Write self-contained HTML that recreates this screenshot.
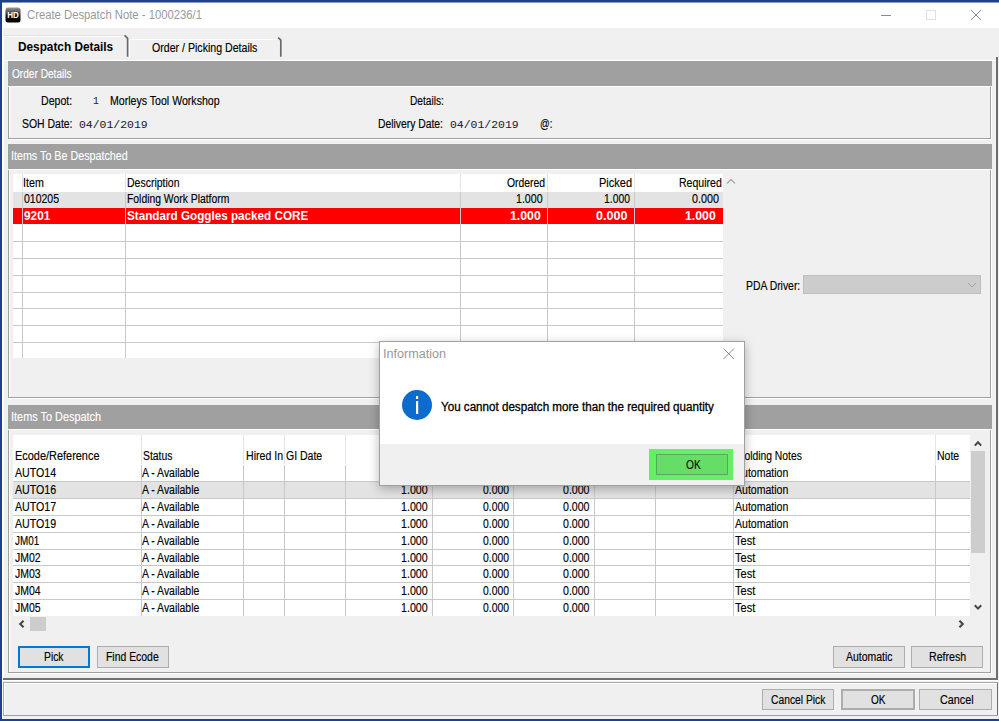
<!DOCTYPE html>
<html><head><meta charset="utf-8"><style>
html,body{margin:0;padding:0;}
body{width:999px;height:721px;position:relative;overflow:hidden;background:#f0f0f0;font-family:'Liberation Sans', sans-serif;}
.a{position:absolute;}
.t{position:absolute;white-space:nowrap;transform-origin:0 0;-webkit-text-stroke:0.15px currentColor;}
svg{position:absolute;}
</style></head><body>
<div class="a" style="left:0px;top:0px;width:999px;height:721px;background:#f0f0f0;"></div>
<div class="a" style="left:2px;top:2px;width:997px;height:26px;background:#ffffff;"></div>
<div class="a" style="left:2px;top:2px;width:997px;height:1px;background:#8d97b8;"></div>
<div class="a" style="left:0px;top:0px;width:999px;height:2px;background:#213f8f;"></div>
<div class="a" style="left:0px;top:0px;width:2px;height:721px;background:#213f8f;"></div>
<div class="a" style="left:0px;top:719px;width:999px;height:2px;background:#213f8f;"></div>
<svg style="left:5px;top:7px" width="16" height="16" viewBox="0 0 16 16">
<defs><linearGradient id="hdg" x1="0" y1="0" x2="0" y2="1"><stop offset="0" stop-color="#9a9a9a"/><stop offset="0.3" stop-color="#555"/><stop offset="0.55" stop-color="#111"/><stop offset="1" stop-color="#000"/></linearGradient></defs>
<rect x="0.5" y="0.5" width="15" height="15" rx="2.5" fill="url(#hdg)"/>
<text x="8" y="10.6" text-anchor="middle" font-family="Liberation Sans" font-weight="bold" font-size="8.8" textLength="11.6" lengthAdjust="spacingAndGlyphs" fill="#fff">HD</text>
</svg>
<div class="t" style="left:26.70px;top:4.80px;font:normal 13px/20px 'Liberation Sans', sans-serif;color:#999999;transform:scaleX(0.8679);-webkit-text-stroke:0;">Create Despatch Note - 1000236/1</div>
<div class="a" style="left:881px;top:15px;width:10px;height:1px;background:#8a8a8a;"></div>
<div class="a" style="left:926px;top:10px;width:10px;height:10px;border:1px solid #e0e0e0;box-sizing:border-box;"></div>
<svg style="left:970px;top:9px" width="12" height="12" viewBox="0 0 12 12"><path d="M1 1L11 11M11 1L1 11" stroke="#808080" stroke-width="0.9"/></svg>
<div class="a" style="left:4px;top:35px;width:123px;height:1px;background:#e3e3e3;"></div>
<div class="a" style="left:2px;top:27px;width:1px;height:692px;background:#ffffff;"></div>
<div class="a" style="left:4px;top:37px;width:124px;height:24px;background:#f0f0f0;"></div>
<div class="a" style="left:5px;top:36px;width:122px;height:1px;background:#ffffff;"></div>
<div class="a" style="left:3px;top:37px;width:1px;height:24px;background:#ffffff;"></div>
<svg style="left:0;top:0" width="300" height="60"><path d="M124.6 35.4L127.6 38.4L127.6 56.8" fill="none" stroke="#6a6a6a" stroke-width="1.7"/><path d="M278.2 37.6L280.8 40.2L280.8 56.8" fill="none" stroke="#6a6a6a" stroke-width="1.7"/></svg>
<div class="t" style="left:17.60px;top:37.00px;font:bold 12px/20px 'Liberation Sans', sans-serif;color:#000;transform:scaleX(0.9832);-webkit-text-stroke:0;">Despatch Details</div>
<div class="a" style="left:130px;top:39px;width:147px;height:1px;background:#ffffff;"></div>
<div class="a" style="left:129px;top:40px;width:1px;height:17px;background:#ffffff;"></div>
<div class="t" style="left:151.60px;top:38.00px;font:normal 12px/20px 'Liberation Sans', sans-serif;color:#000;transform:scaleX(0.8829);">Order / Picking Details</div>
<div class="a" style="left:3px;top:60px;width:994px;height:1px;background:#ffffff;"></div>
<div class="a" style="left:3px;top:60px;width:1px;height:620px;background:#ffffff;"></div>
<div class="a" style="left:996px;top:57px;width:2px;height:623px;background:#6e6e6e;"></div>
<div class="a" style="left:3px;top:678px;width:995px;height:2px;background:#707070;"></div>
<div class="a" style="left:8px;top:61px;width:984px;height:25px;background:#a0a0a0;"></div>
<div class="t" style="left:12.00px;top:63.50px;font:normal 12px/20px 'Liberation Sans', sans-serif;color:#ffffff;transform:scaleX(0.8431);-webkit-text-stroke:0.12px #fff;">Order Details</div>
<div class="a" style="left:8px;top:86px;width:984px;height:1px;background:#ffffff;"></div>
<div class="a" style="left:8px;top:87px;width:1px;height:52px;background:#a0a0a0;"></div>
<div class="a" style="left:9px;top:87px;width:1px;height:52px;background:#ffffff;"></div>
<div class="a" style="left:9px;top:138px;width:982px;height:1px;background:#a0a0a0;"></div>
<div class="a" style="left:8px;top:139px;width:984px;height:1px;background:#ffffff;"></div>
<div class="a" style="left:990px;top:87px;width:1px;height:52px;background:#a0a0a0;"></div>
<div class="a" style="left:991px;top:86px;width:1px;height:53px;background:#ffffff;"></div>
<div class="t" style="left:40.80px;top:91.00px;font:normal 12px/20px 'Liberation Sans', sans-serif;color:#000;transform:scaleX(0.8823);">Depot:</div>
<div class="t" style="left:92.60px;top:91.00px;font:normal 10.5px/20px 'Liberation Mono', monospace;color:#1a1a30;transform:scaleX(0.9167);-webkit-text-stroke:0.05px #1a1a30;">1</div>
<div class="t" style="left:110.20px;top:91.00px;font:normal 12px/20px 'Liberation Sans', sans-serif;color:#000;transform:scaleX(0.8821);">Morleys Tool Workshop</div>
<div class="t" style="left:21.50px;top:114.30px;font:normal 12px/20px 'Liberation Sans', sans-serif;color:#000;transform:scaleX(0.8702);">SOH Date:</div>
<div class="t" style="left:78.70px;top:115.30px;font:normal 10.5px/20px 'Liberation Mono', monospace;color:#1a1a30;transform:scaleX(1.0892);-webkit-text-stroke:0.05px #1a1a30;">04/01/2019</div>
<div class="t" style="left:409.60px;top:91.00px;font:normal 12px/20px 'Liberation Sans', sans-serif;color:#000;transform:scaleX(0.8443);">Details:</div>
<div class="t" style="left:378.40px;top:114.30px;font:normal 12px/20px 'Liberation Sans', sans-serif;color:#000;transform:scaleX(0.8624);">Delivery Date:</div>
<div class="t" style="left:450.40px;top:115.30px;font:normal 10.5px/20px 'Liberation Mono', monospace;color:#1a1a30;transform:scaleX(1.0892);-webkit-text-stroke:0.05px #1a1a30;">04/01/2019</div>
<div class="t" style="left:539.60px;top:114.30px;font:normal 12px/20px 'Liberation Sans', sans-serif;color:#000;transform:scaleX(0.7970);">@:</div>
<div class="a" style="left:8px;top:144px;width:984px;height:25px;background:#a0a0a0;"></div>
<div class="t" style="left:11.31px;top:146.00px;font:normal 12px/20px 'Liberation Sans', sans-serif;color:#ffffff;transform:scaleX(0.8942);-webkit-text-stroke:0.12px #fff;">Items To Be Despatched</div>
<div class="a" style="left:8px;top:169px;width:984px;height:1px;background:#ffffff;"></div>
<div class="a" style="left:8px;top:170px;width:1px;height:228px;background:#a0a0a0;"></div>
<div class="a" style="left:9px;top:170px;width:1px;height:227px;background:#ffffff;"></div>
<div class="a" style="left:9px;top:397px;width:982px;height:1px;background:#a0a0a0;"></div>
<div class="a" style="left:8px;top:398px;width:984px;height:1px;background:#ffffff;"></div>
<div class="a" style="left:990px;top:170px;width:1px;height:228px;background:#a0a0a0;"></div>
<div class="a" style="left:991px;top:169px;width:1px;height:230px;background:#ffffff;"></div>
<div class="a" style="left:13px;top:174px;width:710px;height:184px;background:#ffffff;"></div>
<div class="a" style="left:13px;top:192px;width:710px;height:16px;background:#e3e3e3;"></div>
<div class="a" style="left:13px;top:208px;width:710px;height:16px;background:#ff0000;"></div>
<div class="a" style="left:13px;top:241px;width:710px;height:1px;background:#c8c8c8;"></div>
<div class="a" style="left:13px;top:258px;width:710px;height:1px;background:#c8c8c8;"></div>
<div class="a" style="left:13px;top:275px;width:710px;height:1px;background:#c8c8c8;"></div>
<div class="a" style="left:13px;top:292px;width:710px;height:1px;background:#c8c8c8;"></div>
<div class="a" style="left:13px;top:308px;width:710px;height:1px;background:#c8c8c8;"></div>
<div class="a" style="left:13px;top:325px;width:710px;height:1px;background:#c8c8c8;"></div>
<div class="a" style="left:13px;top:342px;width:710px;height:1px;background:#c8c8c8;"></div>
<div class="a" style="left:22px;top:174px;width:1px;height:17px;background:#e4e4e4;"></div>
<div class="a" style="left:22px;top:192px;width:1px;height:166px;background:#c8c8c8;"></div>
<div class="a" style="left:125px;top:174px;width:1px;height:17px;background:#e4e4e4;"></div>
<div class="a" style="left:125px;top:192px;width:1px;height:166px;background:#c8c8c8;"></div>
<div class="a" style="left:460px;top:174px;width:1px;height:17px;background:#e4e4e4;"></div>
<div class="a" style="left:460px;top:192px;width:1px;height:166px;background:#c8c8c8;"></div>
<div class="a" style="left:547px;top:174px;width:1px;height:17px;background:#e4e4e4;"></div>
<div class="a" style="left:547px;top:192px;width:1px;height:166px;background:#c8c8c8;"></div>
<div class="a" style="left:634px;top:174px;width:1px;height:17px;background:#e4e4e4;"></div>
<div class="a" style="left:634px;top:192px;width:1px;height:166px;background:#c8c8c8;"></div>
<div class="t" style="left:23.11px;top:172.50px;font:normal 12px/20px 'Liberation Sans', sans-serif;color:#000;transform:scaleX(0.8907);">Item</div>
<div class="t" style="left:126.90px;top:172.50px;font:normal 12px/20px 'Liberation Sans', sans-serif;color:#000;transform:scaleX(0.8745);">Description</div>
<div class="t" style="left:507.30px;top:172.80px;font:normal 12px/20px 'Liberation Sans', sans-serif;color:#000;transform:scaleX(0.8651);">Ordered</div>
<div class="t" style="left:599.30px;top:172.80px;font:normal 12px/20px 'Liberation Sans', sans-serif;color:#000;transform:scaleX(0.9167);">Picked</div>
<div class="t" style="left:678.80px;top:172.80px;font:normal 12px/20px 'Liberation Sans', sans-serif;color:#000;transform:scaleX(0.8787);">Required</div>
<svg style="left:726px;top:178px" width="10" height="7" viewBox="0 0 10 7"><path d="M1 5.5L5 1.5L9 5.5" fill="none" stroke="#a8a8a8" stroke-width="1.3"/></svg>
<div class="t" style="left:24.00px;top:189.10px;font:normal 12px/20px 'Liberation Sans', sans-serif;color:#000;transform:scaleX(0.8744);">010205</div>
<div class="t" style="left:126.90px;top:189.10px;font:normal 12px/20px 'Liberation Sans', sans-serif;color:#000;transform:scaleX(0.8634);">Folding Work Platform</div>
<div class="t" style="left:516.30px;top:189.00px;font:normal 12px/20px 'Liberation Sans', sans-serif;color:#000;transform:scaleX(0.8862);">1.000</div>
<div class="t" style="left:603.50px;top:189.00px;font:normal 12px/20px 'Liberation Sans', sans-serif;color:#000;transform:scaleX(0.8631);">1.000</div>
<div class="t" style="left:691.60px;top:189.00px;font:normal 12px/20px 'Liberation Sans', sans-serif;color:#000;transform:scaleX(0.8960);">0.000</div>
<div class="t" style="left:24.00px;top:206.00px;font:bold 12px/20px 'Liberation Sans', sans-serif;color:#fff;transform:scaleX(0.9844);-webkit-text-stroke:0;">9201</div>
<div class="t" style="left:127.00px;top:206.00px;font:bold 12px/20px 'Liberation Sans', sans-serif;color:#fff;transform:scaleX(0.9745);-webkit-text-stroke:0;">Standard Goggles packed CORE</div>
<div class="t" style="left:509.90px;top:206.00px;font:bold 12px/20px 'Liberation Sans', sans-serif;color:#fff;transform:scaleX(1.0245);-webkit-text-stroke:0;">1.000</div>
<div class="t" style="left:596.40px;top:206.00px;font:bold 12px/20px 'Liberation Sans', sans-serif;color:#fff;transform:scaleX(1.0443);-webkit-text-stroke:0;">0.000</div>
<div class="t" style="left:685.20px;top:206.00px;font:bold 12px/20px 'Liberation Sans', sans-serif;color:#fff;transform:scaleX(1.0245);-webkit-text-stroke:0;">1.000</div>
<div class="t" style="left:745.70px;top:275.60px;font:normal 12px/20px 'Liberation Sans', sans-serif;color:#000;transform:scaleX(0.8650);">PDA Driver:</div>
<div class="a" style="left:803px;top:275px;width:178px;height:19px;background:#cccccc;border:1px solid #bfbfbf;box-sizing:border-box;"></div>
<svg style="left:967px;top:282px" width="10" height="6" viewBox="0 0 10 6"><path d="M1 1L5 5L9 1" fill="none" stroke="#a0a0a0" stroke-width="1"/></svg>
<div class="a" style="left:8px;top:405px;width:984px;height:24px;background:#a0a0a0;"></div>
<div class="t" style="left:11.29px;top:407.00px;font:normal 12px/20px 'Liberation Sans', sans-serif;color:#ffffff;transform:scaleX(0.9089);-webkit-text-stroke:0.12px #fff;">Items To Despatch</div>
<div class="a" style="left:8px;top:429px;width:984px;height:1px;background:#ffffff;"></div>
<div class="a" style="left:8px;top:430px;width:1px;height:243px;background:#a0a0a0;"></div>
<div class="a" style="left:9px;top:430px;width:1px;height:243px;background:#ffffff;"></div>
<div class="a" style="left:9px;top:672px;width:982px;height:1px;background:#a0a0a0;"></div>
<div class="a" style="left:8px;top:673px;width:984px;height:1px;background:#ffffff;"></div>
<div class="a" style="left:990px;top:430px;width:1px;height:243px;background:#a0a0a0;"></div>
<div class="a" style="left:991px;top:429px;width:1px;height:244px;background:#ffffff;"></div>
<div class="a" style="left:13px;top:435px;width:957px;height:181px;background:#ffffff;"></div>
<div class="a" style="left:13px;top:482px;width:957px;height:16px;background:#e3e3e3;"></div>
<div class="a" style="left:13px;top:481px;width:957px;height:1px;background:#c8c8c8;"></div>
<div class="a" style="left:13px;top:498px;width:957px;height:1px;background:#c8c8c8;"></div>
<div class="a" style="left:13px;top:515px;width:957px;height:1px;background:#c8c8c8;"></div>
<div class="a" style="left:13px;top:532px;width:957px;height:1px;background:#c8c8c8;"></div>
<div class="a" style="left:13px;top:549px;width:957px;height:1px;background:#c8c8c8;"></div>
<div class="a" style="left:13px;top:565px;width:957px;height:1px;background:#c8c8c8;"></div>
<div class="a" style="left:13px;top:582px;width:957px;height:1px;background:#c8c8c8;"></div>
<div class="a" style="left:13px;top:599px;width:957px;height:1px;background:#c8c8c8;"></div>
<div class="a" style="left:141px;top:435px;width:1px;height:29px;background:#e4e4e4;"></div>
<div class="a" style="left:141px;top:465px;width:1px;height:151px;background:#c8c8c8;"></div>
<div class="a" style="left:243px;top:435px;width:1px;height:29px;background:#e4e4e4;"></div>
<div class="a" style="left:243px;top:465px;width:1px;height:151px;background:#c8c8c8;"></div>
<div class="a" style="left:284px;top:435px;width:1px;height:29px;background:#e4e4e4;"></div>
<div class="a" style="left:284px;top:465px;width:1px;height:151px;background:#c8c8c8;"></div>
<div class="a" style="left:345px;top:435px;width:1px;height:29px;background:#e4e4e4;"></div>
<div class="a" style="left:345px;top:465px;width:1px;height:151px;background:#c8c8c8;"></div>
<div class="a" style="left:432px;top:435px;width:1px;height:29px;background:#e4e4e4;"></div>
<div class="a" style="left:432px;top:465px;width:1px;height:151px;background:#c8c8c8;"></div>
<div class="a" style="left:513px;top:435px;width:1px;height:29px;background:#e4e4e4;"></div>
<div class="a" style="left:513px;top:465px;width:1px;height:151px;background:#c8c8c8;"></div>
<div class="a" style="left:594px;top:435px;width:1px;height:29px;background:#e4e4e4;"></div>
<div class="a" style="left:594px;top:465px;width:1px;height:151px;background:#c8c8c8;"></div>
<div class="a" style="left:655px;top:435px;width:1px;height:29px;background:#e4e4e4;"></div>
<div class="a" style="left:655px;top:465px;width:1px;height:151px;background:#c8c8c8;"></div>
<div class="a" style="left:733px;top:435px;width:1px;height:29px;background:#e4e4e4;"></div>
<div class="a" style="left:733px;top:465px;width:1px;height:151px;background:#c8c8c8;"></div>
<div class="a" style="left:935px;top:435px;width:1px;height:29px;background:#e4e4e4;"></div>
<div class="a" style="left:935px;top:465px;width:1px;height:151px;background:#c8c8c8;"></div>
<div class="t" style="left:15.20px;top:445.70px;font:normal 12px/20px 'Liberation Sans', sans-serif;color:#000;transform:scaleX(0.9113);">Ecode/Reference</div>
<div class="t" style="left:142.50px;top:445.70px;font:normal 12px/20px 'Liberation Sans', sans-serif;color:#000;transform:scaleX(0.8671);">Status</div>
<div class="t" style="left:245.50px;top:445.70px;font:normal 12px/20px 'Liberation Sans', sans-serif;color:#000;transform:scaleX(0.8828);">Hired In</div>
<div class="t" style="left:285.50px;top:445.70px;font:normal 12px/20px 'Liberation Sans', sans-serif;color:#000;transform:scaleX(0.8758);">GI Date</div>
<div class="t" style="left:736.68px;top:445.70px;font:normal 12px/20px 'Liberation Sans', sans-serif;color:#000;transform:scaleX(0.8600);">Holding Notes</div>
<div class="t" style="left:937.30px;top:445.70px;font:normal 12px/20px 'Liberation Sans', sans-serif;color:#000;transform:scaleX(0.8725);">Note</div>
<div class="t" style="left:15.00px;top:463.30px;font:normal 12px/20px 'Liberation Sans', sans-serif;color:#000;transform:scaleX(0.8869);">AUTO14</div>
<div class="t" style="left:142.00px;top:463.30px;font:normal 12px/20px 'Liberation Sans', sans-serif;color:#000;transform:scaleX(0.8707);">A - Available</div>
<div class="t" style="left:400.80px;top:463.30px;font:normal 12px/20px 'Liberation Sans', sans-serif;color:#000;transform:scaleX(0.8895);">1.000</div>
<div class="t" style="left:482.70px;top:463.30px;font:normal 12px/20px 'Liberation Sans', sans-serif;color:#000;transform:scaleX(0.8631);">0.000</div>
<div class="t" style="left:563.20px;top:463.30px;font:normal 12px/20px 'Liberation Sans', sans-serif;color:#000;transform:scaleX(0.8829);">0.000</div>
<div class="t" style="left:735.40px;top:463.30px;font:normal 12px/20px 'Liberation Sans', sans-serif;color:#000;transform:scaleX(0.8779);">Automation</div>
<div class="t" style="left:15.00px;top:480.15px;font:normal 12px/20px 'Liberation Sans', sans-serif;color:#000;transform:scaleX(0.8869);">AUTO16</div>
<div class="t" style="left:142.00px;top:480.15px;font:normal 12px/20px 'Liberation Sans', sans-serif;color:#000;transform:scaleX(0.8707);">A - Available</div>
<div class="t" style="left:400.80px;top:480.15px;font:normal 12px/20px 'Liberation Sans', sans-serif;color:#000;transform:scaleX(0.8895);">1.000</div>
<div class="t" style="left:482.70px;top:480.15px;font:normal 12px/20px 'Liberation Sans', sans-serif;color:#000;transform:scaleX(0.8631);">0.000</div>
<div class="t" style="left:563.20px;top:480.15px;font:normal 12px/20px 'Liberation Sans', sans-serif;color:#000;transform:scaleX(0.8829);">0.000</div>
<div class="t" style="left:735.40px;top:480.15px;font:normal 12px/20px 'Liberation Sans', sans-serif;color:#000;transform:scaleX(0.8779);">Automation</div>
<div class="t" style="left:15.00px;top:497.00px;font:normal 12px/20px 'Liberation Sans', sans-serif;color:#000;transform:scaleX(0.8869);">AUTO17</div>
<div class="t" style="left:142.00px;top:497.00px;font:normal 12px/20px 'Liberation Sans', sans-serif;color:#000;transform:scaleX(0.8707);">A - Available</div>
<div class="t" style="left:400.80px;top:497.00px;font:normal 12px/20px 'Liberation Sans', sans-serif;color:#000;transform:scaleX(0.8895);">1.000</div>
<div class="t" style="left:482.70px;top:497.00px;font:normal 12px/20px 'Liberation Sans', sans-serif;color:#000;transform:scaleX(0.8631);">0.000</div>
<div class="t" style="left:563.20px;top:497.00px;font:normal 12px/20px 'Liberation Sans', sans-serif;color:#000;transform:scaleX(0.8829);">0.000</div>
<div class="t" style="left:735.40px;top:497.00px;font:normal 12px/20px 'Liberation Sans', sans-serif;color:#000;transform:scaleX(0.8779);">Automation</div>
<div class="t" style="left:15.00px;top:513.85px;font:normal 12px/20px 'Liberation Sans', sans-serif;color:#000;transform:scaleX(0.8869);">AUTO19</div>
<div class="t" style="left:142.00px;top:513.85px;font:normal 12px/20px 'Liberation Sans', sans-serif;color:#000;transform:scaleX(0.8707);">A - Available</div>
<div class="t" style="left:400.80px;top:513.85px;font:normal 12px/20px 'Liberation Sans', sans-serif;color:#000;transform:scaleX(0.8895);">1.000</div>
<div class="t" style="left:482.70px;top:513.85px;font:normal 12px/20px 'Liberation Sans', sans-serif;color:#000;transform:scaleX(0.8631);">0.000</div>
<div class="t" style="left:563.20px;top:513.85px;font:normal 12px/20px 'Liberation Sans', sans-serif;color:#000;transform:scaleX(0.8829);">0.000</div>
<div class="t" style="left:735.40px;top:513.85px;font:normal 12px/20px 'Liberation Sans', sans-serif;color:#000;transform:scaleX(0.8779);">Automation</div>
<div class="t" style="left:15.00px;top:530.70px;font:normal 12px/20px 'Liberation Sans', sans-serif;color:#000;transform:scaleX(0.8224);">JM01</div>
<div class="t" style="left:142.00px;top:530.70px;font:normal 12px/20px 'Liberation Sans', sans-serif;color:#000;transform:scaleX(0.8707);">A - Available</div>
<div class="t" style="left:400.80px;top:530.70px;font:normal 12px/20px 'Liberation Sans', sans-serif;color:#000;transform:scaleX(0.8895);">1.000</div>
<div class="t" style="left:482.70px;top:530.70px;font:normal 12px/20px 'Liberation Sans', sans-serif;color:#000;transform:scaleX(0.8631);">0.000</div>
<div class="t" style="left:563.20px;top:530.70px;font:normal 12px/20px 'Liberation Sans', sans-serif;color:#000;transform:scaleX(0.8829);">0.000</div>
<div class="t" style="left:735.40px;top:530.70px;font:normal 12px/20px 'Liberation Sans', sans-serif;color:#000;transform:scaleX(0.9174);">Test</div>
<div class="t" style="left:15.00px;top:547.55px;font:normal 12px/20px 'Liberation Sans', sans-serif;color:#000;transform:scaleX(0.8729);">JM02</div>
<div class="t" style="left:142.00px;top:547.55px;font:normal 12px/20px 'Liberation Sans', sans-serif;color:#000;transform:scaleX(0.8707);">A - Available</div>
<div class="t" style="left:400.80px;top:547.55px;font:normal 12px/20px 'Liberation Sans', sans-serif;color:#000;transform:scaleX(0.8895);">1.000</div>
<div class="t" style="left:482.70px;top:547.55px;font:normal 12px/20px 'Liberation Sans', sans-serif;color:#000;transform:scaleX(0.8631);">0.000</div>
<div class="t" style="left:563.20px;top:547.55px;font:normal 12px/20px 'Liberation Sans', sans-serif;color:#000;transform:scaleX(0.8829);">0.000</div>
<div class="t" style="left:735.40px;top:547.55px;font:normal 12px/20px 'Liberation Sans', sans-serif;color:#000;transform:scaleX(0.9174);">Test</div>
<div class="t" style="left:15.00px;top:564.40px;font:normal 12px/20px 'Liberation Sans', sans-serif;color:#000;transform:scaleX(0.8729);">JM03</div>
<div class="t" style="left:142.00px;top:564.40px;font:normal 12px/20px 'Liberation Sans', sans-serif;color:#000;transform:scaleX(0.8707);">A - Available</div>
<div class="t" style="left:400.80px;top:564.40px;font:normal 12px/20px 'Liberation Sans', sans-serif;color:#000;transform:scaleX(0.8895);">1.000</div>
<div class="t" style="left:482.70px;top:564.40px;font:normal 12px/20px 'Liberation Sans', sans-serif;color:#000;transform:scaleX(0.8631);">0.000</div>
<div class="t" style="left:563.20px;top:564.40px;font:normal 12px/20px 'Liberation Sans', sans-serif;color:#000;transform:scaleX(0.8829);">0.000</div>
<div class="t" style="left:735.40px;top:564.40px;font:normal 12px/20px 'Liberation Sans', sans-serif;color:#000;transform:scaleX(0.9174);">Test</div>
<div class="t" style="left:15.00px;top:581.25px;font:normal 12px/20px 'Liberation Sans', sans-serif;color:#000;transform:scaleX(0.8729);">JM04</div>
<div class="t" style="left:142.00px;top:581.25px;font:normal 12px/20px 'Liberation Sans', sans-serif;color:#000;transform:scaleX(0.8707);">A - Available</div>
<div class="t" style="left:400.80px;top:581.25px;font:normal 12px/20px 'Liberation Sans', sans-serif;color:#000;transform:scaleX(0.8895);">1.000</div>
<div class="t" style="left:482.70px;top:581.25px;font:normal 12px/20px 'Liberation Sans', sans-serif;color:#000;transform:scaleX(0.8631);">0.000</div>
<div class="t" style="left:563.20px;top:581.25px;font:normal 12px/20px 'Liberation Sans', sans-serif;color:#000;transform:scaleX(0.8829);">0.000</div>
<div class="t" style="left:735.40px;top:581.25px;font:normal 12px/20px 'Liberation Sans', sans-serif;color:#000;transform:scaleX(0.9174);">Test</div>
<div class="t" style="left:15.00px;top:598.10px;font:normal 12px/20px 'Liberation Sans', sans-serif;color:#000;transform:scaleX(0.8729);">JM05</div>
<div class="t" style="left:142.00px;top:598.10px;font:normal 12px/20px 'Liberation Sans', sans-serif;color:#000;transform:scaleX(0.8707);">A - Available</div>
<div class="t" style="left:400.80px;top:598.10px;font:normal 12px/20px 'Liberation Sans', sans-serif;color:#000;transform:scaleX(0.8895);">1.000</div>
<div class="t" style="left:482.70px;top:598.10px;font:normal 12px/20px 'Liberation Sans', sans-serif;color:#000;transform:scaleX(0.8631);">0.000</div>
<div class="t" style="left:563.20px;top:598.10px;font:normal 12px/20px 'Liberation Sans', sans-serif;color:#000;transform:scaleX(0.8829);">0.000</div>
<div class="t" style="left:735.40px;top:598.10px;font:normal 12px/20px 'Liberation Sans', sans-serif;color:#000;transform:scaleX(0.9174);">Test</div>
<div class="a" style="left:970px;top:435px;width:16px;height:181px;background:#f0f0f0;"></div>
<div class="a" style="left:971px;top:451px;width:14px;height:102px;background:#cdcdcd;"></div>
<svg style="left:974px;top:440px" width="8" height="7" viewBox="0 0 8 7"><path d="M0.8 5.6L4 2.2L7.2 5.6" fill="none" stroke="#454545" stroke-width="2"/></svg>
<svg style="left:974px;top:604px" width="8" height="7" viewBox="0 0 8 7"><path d="M0.8 1.2L4 4.6L7.2 1.2" fill="none" stroke="#454545" stroke-width="2"/></svg>
<div class="a" style="left:13px;top:616px;width:957px;height:16px;background:#f0f0f0;"></div>
<div class="a" style="left:30px;top:617px;width:16px;height:14px;background:#cdcdcd;"></div>
<svg style="left:18px;top:620px" width="7" height="8" viewBox="0 0 7 8"><path d="M5.6 0.8L2.2 4L5.6 7.2" fill="none" stroke="#454545" stroke-width="2"/></svg>
<svg style="left:958px;top:620px" width="7" height="8" viewBox="0 0 7 8"><path d="M1.4 0.8L4.8 4L1.4 7.2" fill="none" stroke="#454545" stroke-width="2"/></svg>
<div class="a" style="left:18px;top:646px;width:72px;height:22px;background:#e1e1e1;border:2px solid #0078d7;box-sizing:border-box;"></div>
<div class="t" style="left:43.60px;top:647.00px;font:normal 12px/20px 'Liberation Sans', sans-serif;color:#000;transform:scaleX(0.8619);">Pick</div>
<div class="a" style="left:97px;top:646px;width:72px;height:22px;background:#e1e1e1;border:1px solid #adadad;box-sizing:border-box;"></div>
<div class="t" style="left:106.00px;top:647.00px;font:normal 12px/20px 'Liberation Sans', sans-serif;color:#000;transform:scaleX(0.8684);">Find Ecode</div>
<div class="a" style="left:833px;top:646px;width:72px;height:22px;background:#e1e1e1;border:1px solid #adadad;box-sizing:border-box;"></div>
<div class="t" style="left:846.00px;top:647.00px;font:normal 12px/20px 'Liberation Sans', sans-serif;color:#000;transform:scaleX(0.8734);">Automatic</div>
<div class="a" style="left:911px;top:646px;width:72px;height:22px;background:#e1e1e1;border:1px solid #adadad;box-sizing:border-box;"></div>
<div class="t" style="left:929.30px;top:647.00px;font:normal 12px/20px 'Liberation Sans', sans-serif;color:#000;transform:scaleX(0.8877);">Refresh</div>
<div class="a" style="left:3px;top:680px;width:995px;height:1px;background:#ffffff;"></div>
<div class="a" style="left:3px;top:682px;width:995px;height:1px;background:#a8a8a8;"></div>
<div class="a" style="left:4px;top:683px;width:993px;height:1px;background:#ffffff;"></div>
<div class="a" style="left:3px;top:682px;width:1px;height:34px;background:#a8a8a8;"></div>
<div class="a" style="left:4px;top:683px;width:1px;height:32px;background:#ffffff;"></div>
<div class="a" style="left:997px;top:683px;width:1px;height:33px;background:#6e6e6e;"></div>
<div class="a" style="left:4px;top:715px;width:994px;height:1px;background:#a0a0a0;"></div>
<div class="a" style="left:762px;top:689px;width:72px;height:21px;background:#e1e1e1;border:1px solid #adadad;box-sizing:border-box;"></div>
<div class="t" style="left:770.50px;top:690.00px;font:normal 12px/20px 'Liberation Sans', sans-serif;color:#000;transform:scaleX(0.8577);">Cancel Pick</div>
<div class="a" style="left:841px;top:689px;width:74px;height:21px;background:#e1e1e1;border:2px solid #adadad;box-sizing:border-box;"></div>
<div class="t" style="left:871.20px;top:690.00px;font:normal 12px/20px 'Liberation Sans', sans-serif;color:#000;transform:scaleX(0.8365);">OK</div>
<div class="a" style="left:919px;top:689px;width:73px;height:21px;background:#e1e1e1;border:1px solid #adadad;box-sizing:border-box;"></div>
<div class="t" style="left:939.50px;top:690.00px;font:normal 12px/20px 'Liberation Sans', sans-serif;color:#000;transform:scaleX(0.8995);">Cancel</div>
<div class="a" style="left:379px;top:341px;width:366px;height:145px;box-shadow:0 3px 10px rgba(0,0,0,0.28);z-index:5"></div>
<div class="a" style="left:379px;top:341px;width:366px;height:145px;background:#ffffff;border:1px solid #a0a0a0;box-sizing:border-box;z-index:6;"></div>
<div class="a" style="left:380px;top:444px;width:364px;height:41px;background:#f0f0f0;z-index:6;"></div>
<div class="t" style="left:382.55px;top:343.50px;font:normal 12px/20px 'Liberation Sans', sans-serif;color:#999999;transform:scaleX(1.0505);z-index:7;-webkit-text-stroke:0;">Information</div>
<svg style="left:723px;top:348px;z-index:7" width="12" height="12" viewBox="0 0 12 12"><path d="M0.5 0.5L11 11M11 0.5L0.5 11" stroke="#888" stroke-width="1"/></svg>
<svg style="left:401px;top:389px;z-index:7" width="32" height="32" viewBox="0 0 32 32"><circle cx="16" cy="16" r="15" fill="#0a6ccf"/><rect x="15" y="7" width="2.2" height="3" fill="#fff"/><rect x="15" y="12" width="2.2" height="13" fill="#fff"/></svg>
<div class="t" style="left:441.40px;top:396.50px;font:normal 12px/20px 'Liberation Sans', sans-serif;color:#000;transform:scaleX(0.9682);z-index:7;-webkit-text-stroke:0.3px #000;">You cannot despatch more than the required quantity</div>
<div class="a" style="left:649px;top:449px;width:84px;height:31px;background:#66ee66;z-index:7;"></div>
<div class="a" style="left:656px;top:454px;width:72px;height:21px;background:#66dd66;border:1px solid #55aa55;box-sizing:border-box;z-index:7;"></div>
<div class="t" style="left:685.50px;top:455.30px;font:normal 12px/20px 'Liberation Sans', sans-serif;color:#111;transform:scaleX(0.8480);z-index:8;">OK</div>
</body></html>
